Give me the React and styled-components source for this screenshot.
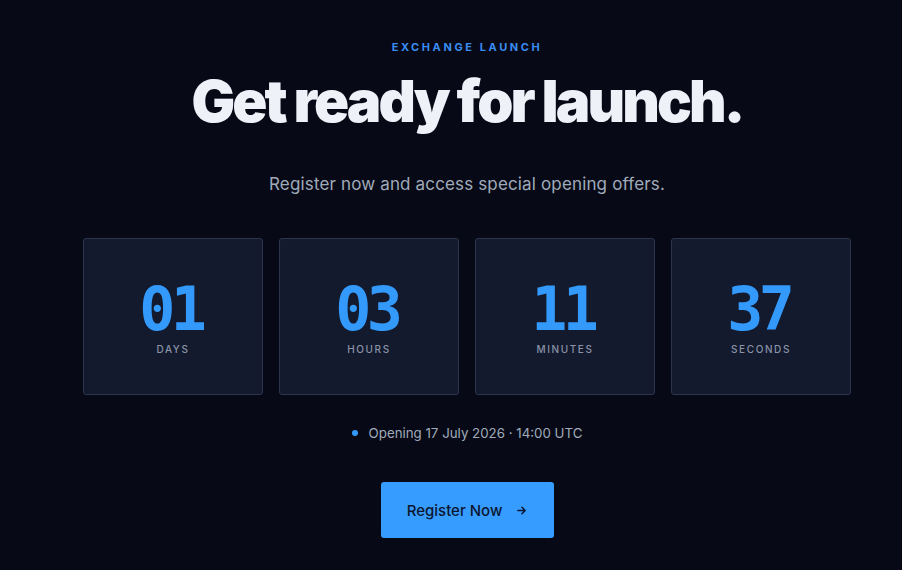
import React from 'react';
import styled, { createGlobalStyle } from 'styled-components';

const GlobalStyle = createGlobalStyle`
  html, body {
    margin: 0;
    padding: 0;
    background: #070a16;
  }
  body {
    font-family: Inter, "Open Sans", sans-serif;
    -webkit-font-smoothing: antialiased;
  }
`;

const Page = styled.main`
  min-height: 570px;
  box-sizing: border-box;
  padding: 40px 0 0 32px;
  display: flex;
  flex-direction: column;
  align-items: center;
  background: #070a16;
`;

const Eyebrow = styled.div`
  color: #3a8cf2;
  font-size: 11px;
  font-weight: 700;
  letter-spacing: 2.6px;
  line-height: 14px;
`;

const Title = styled.h1`
  margin: 12px 0 0;
  color: #eef1f7;
  font-family: Inter, sans-serif;
  font-size: 58px;
  font-weight: 900;
  letter-spacing: -2.9px;
  line-height: 70px;
`;

const Lead = styled.p`
  margin: 36px 0 0;
  color: #a0aabb;
  font-size: 17px;
  letter-spacing: 0.15px;
  line-height: 24px;
`;

const Countdown = styled.div`
  margin-top: 42px;
  width: 768px;
  display: grid;
  grid-template-columns: repeat(4, 1fr);
  gap: 16px;
`;

const Unit = styled.div`
  height: 157px;
  box-sizing: border-box;
  background: #131a2e;
  border: 1px solid #2c354c;
  border-radius: 3px;
  display: flex;
  flex-direction: column;
  align-items: center;
  justify-content: center;
  padding-top: 2px;
`;

const Value = styled.div`
  color: #3399fb;
  font-family: "DejaVu Sans Mono", "Liberation Mono", monospace;
  font-size: 60px;
  font-weight: 700;
  line-height: 58px;
  letter-spacing: -4.5px;
  margin-right: 4.5px;
`;

const Label = styled.div`
  margin-top: 5px;
  color: #8a93a6;
  font-size: 10px;
  font-weight: 500;
  letter-spacing: 1.6px;
  line-height: 12px;
`;

const Opening = styled.div`
  margin-top: 28px;
  display: flex;
  align-items: center;
  gap: 11px;
  color: #a0aabb;
  font-size: 13.3px;
  line-height: 20px;
`;

const Dot = styled.span`
  width: 6px;
  height: 6px;
  border-radius: 50%;
  background: #3399fb;
`;

const RegisterButton = styled.button`
  margin-top: 39px;
  width: 173px;
  height: 56px;
  border: none;
  border-radius: 3px;
  background: #379cff;
  color: #0c1630;
  font-family: Inter, sans-serif;
  font-size: 15px;
  font-weight: 500;
  display: flex;
  align-items: center;
  justify-content: center;
  gap: 14px;
  cursor: pointer;
`;

const units = [
  { value: '01', label: 'DAYS' },
  { value: '03', label: 'HOURS' },
  { value: '11', label: 'MINUTES' },
  { value: '37', label: 'SECONDS' },
];

export default function App() {
  return (
    <>
      <GlobalStyle />
      <Page>
        <Eyebrow>EXCHANGE LAUNCH</Eyebrow>
        <Title>Get ready for launch.</Title>
        <Lead>Register now and access special opening offers.</Lead>
        <Countdown>
          {units.map((u) => (
            <Unit key={u.label}>
              <Value>{u.value}</Value>
              <Label>{u.label}</Label>
            </Unit>
          ))}
        </Countdown>
        <Opening>
          <Dot />
          Opening 17 July 2026 · 14:00 UTC
        </Opening>
        <RegisterButton>
          Register Now
          <svg width='11' height='11' viewBox='0 0 12 12' fill='none'>
            <path d='M2 6h8M6.5 2.5 10 6l-3.5 3.5' stroke='#0c1630' strokeWidth='1.6' strokeLinecap='round' strokeLinejoin='round' />
          </svg>
        </RegisterButton>
      </Page>
    </>
  );
}
